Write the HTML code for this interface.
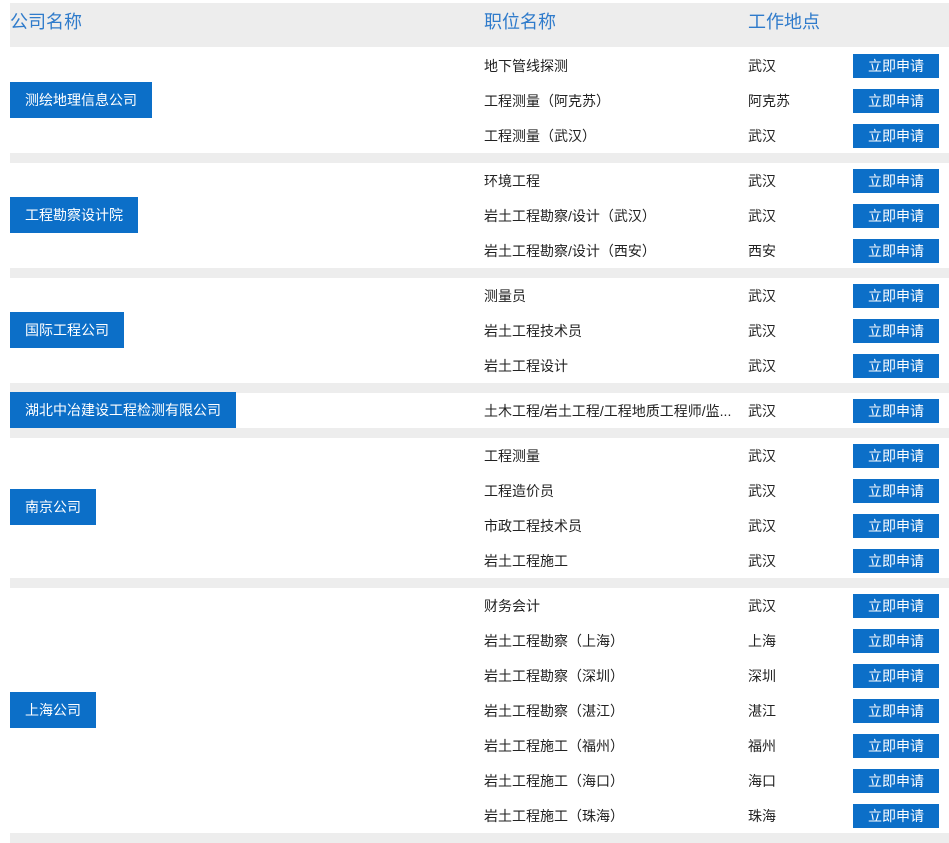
<!DOCTYPE html>
<html><head><meta charset="utf-8"><style>
body{margin:0;width:949px;height:840px;overflow:hidden;background:#fff;font-family:"Liberation Sans","Noto Sans CJK SC",sans-serif;position:relative}
.a{position:absolute}
.hd{left:10px;top:3px;width:939px;height:44px;background:#ededed}
.ht{position:absolute;top:8px;font-size:18px;color:#2f7bcb;line-height:22px}
.sep{left:10px;width:939px;height:10px;background:#ededed}
.co{left:10px;height:36px;line-height:36px;padding:0 15px;background:#0c6fc8;color:#fff;font-size:14px}
.job{left:484px;font-size:14px;color:#222;line-height:20px}
.loc{left:748px;font-size:14px;color:#222;line-height:20px}
.btn{left:853px;width:86px;height:24px;line-height:24px;text-align:center;background:#0c6fc8;color:#fff;font-size:14px}
</style></head><body>
<div class="a hd"><span class="ht" style="left:0">公司名称</span><span class="ht" style="left:474px">职位名称</span><span class="ht" style="left:738px">工作地点</span></div>
<div id="c"></div>
<script>
var g=[[48,"测绘地理信息公司",[["地下管线探测","武汉"],["工程测量（阿克苏）","阿克苏"],["工程测量（武汉）","武汉"]]],
[163,"工程勘察设计院",[["环境工程","武汉"],["岩土工程勘察/设计（武汉）","武汉"],["岩土工程勘察/设计（西安）","西安"]]],
[278,"国际工程公司",[["测量员","武汉"],["岩土工程技术员","武汉"],["岩土工程设计","武汉"]]],
[393,"湖北中冶建设工程检测有限公司",[["土木工程/岩土工程/工程地质工程师/监...","武汉"]]],
[438,"南京公司",[["工程测量","武汉"],["工程造价员","武汉"],["市政工程技术员","武汉"],["岩土工程施工","武汉"]]],
[588,"上海公司",[["财务会计","武汉"],["岩土工程勘察（上海）","上海"],["岩土工程勘察（深圳）","深圳"],["岩土工程勘察（湛江）","湛江"],["岩土工程施工（福州）","福州"],["岩土工程施工（海口）","海口"],["岩土工程施工（珠海）","珠海"]]]];
var h="";
g.forEach(function(x){var y=x[0],r=x[2],H=r.length*35;
h+='<div class="a co" style="top:'+Math.floor(y+H/2-18.5)+'px">'+x[1]+'</div>';
r.forEach(function(j,i){var cy=y+i*35+17.5;
h+='<div class="a job" style="top:'+(cy-10)+'px">'+j[0]+'</div><div class="a loc" style="top:'+(cy-10)+'px">'+j[1]+'</div><div class="a btn" style="top:'+(cy-12)+'px">立即申请</div>';});
h+='<div class="a sep" style="top:'+(y+H)+'px"></div>';});
document.getElementById("c").innerHTML=h;
</script>
</body></html>
